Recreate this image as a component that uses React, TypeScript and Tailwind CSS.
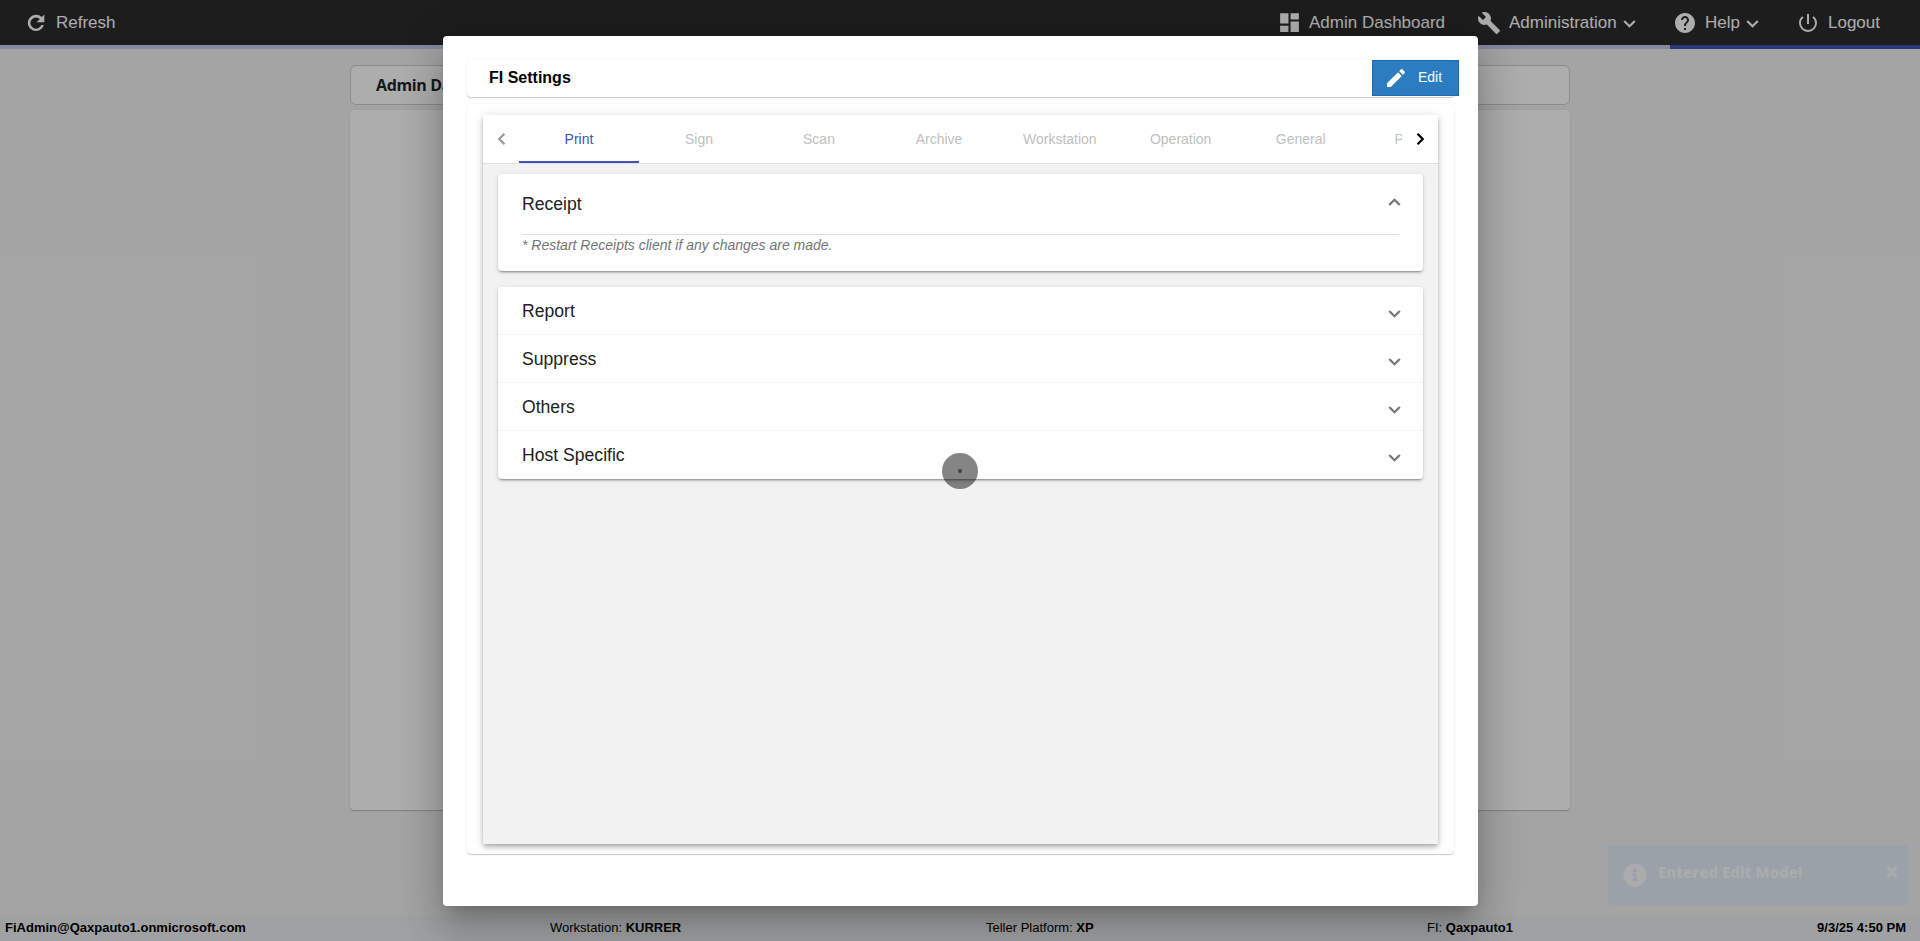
import { MdDashboard, MdBuild, MdHelp, MdPowerSettingsNew, MdEdit } from 'react-icons/md';

const tabs = ['Print', 'Sign', 'Scan', 'Archive', 'Workstation', 'Operation', 'General', 'Platform'];
const sections = ['Report', 'Suppress', 'Others', 'Host Specific'];

const cardShadow = 'shadow-[0_1px_1px_0_rgba(0,0,0,0.2),0_0_2px_0_rgba(0,0,0,0.08)]';
const panelShadow =
  'shadow-[0_3px_1px_-2px_rgba(0,0,0,0.2),0_2px_2px_0_rgba(0,0,0,0.14),0_1px_5px_0_rgba(0,0,0,0.12)]';

function Caret({ className }: { className: string }) {
  return (
    <svg viewBox="0 0 13 8" className={`w-[13px] h-2 ${className}`} fill="none" stroke="currentColor" strokeWidth="2.2">
      <path d="M1.2 1l5.3 5.3L11.8 1" />
    </svg>
  );
}

function RefreshIcon() {
  return (
    <svg viewBox="0 0 24 24" className="w-6 h-6 mt-px" fill="currentColor">
      <path d="M20.3 3.6v7.6h-7.6l3.2-3.2A5.6 5.6 0 1 0 17.3 14h2.6A8.2 8.2 0 1 1 17.8 6.1z" />
    </svg>
  );
}

function Header() {
  return (
    <header>
      <div className="h-[45px] bg-[#2b2b2b] text-white text-[17px] flex items-center justify-between pl-6 pr-10">
        <div className="flex items-center gap-2">
          <RefreshIcon />
          <span>Refresh</span>
        </div>
        <nav className="flex items-center">
          <div className="flex items-center w-[201px]">
            <MdDashboard size={25} className="mr-[7px]" />
            <span>Admin Dashboard</span>
          </div>
          <div className="flex items-center w-[195px]">
            <MdBuild size={24} className="-ml-px mr-2" />
            <span>Administration</span>
            <Caret className="ml-1.5 mt-0.5" />
          </div>
          <div className="flex items-center w-[123px]">
            <MdHelp size={24} className="mr-2" />
            <span>Help</span>
            <Caret className="ml-1.5 mt-0.5" />
          </div>
          <div className="flex items-center">
            <MdPowerSettingsNew size={24} className="mr-2" />
            <span>Logout</span>
          </div>
        </nav>
      </div>
      <div className="h-1 flex bg-[#c5cae9]">
        <div className="ml-auto w-[250px] bg-[#3f51b5]" />
      </div>
    </header>
  );
}

function Footer() {
  return (
    <footer className="h-[26px] bg-[#ebeef0] text-black text-[13px] flex items-center px-[5px]">
      <div className="w-[545px] font-bold">FiAdmin@Qaxpauto1.onmicrosoft.com</div>
      <div className="w-[436px]">Workstation: <b>KURRER</b></div>
      <div className="w-[441px]">Teller Platform: <b>XP</b></div>
      <div>FI: <b>Qaxpauto1</b></div>
      <div className="ml-auto pr-[9px] font-bold">9/3/25 4:50 PM</div>
    </footer>
  );
}

function Toast() {
  return (
    <div className="absolute left-[1608px] top-[845px] w-[300px] h-[60px] rounded-[3px] bg-[#9ba1a8] text-[#a9abad] flex pl-[15px] pr-[10px]">
      <svg viewBox="0 0 512 512" className="w-6 h-6 mt-[18px] mr-[11px] shrink-0" fill="currentColor">
        <path d="M256 8C119 8 8 119 8 256s111 248 248 248 248-111 248-248S393 8 256 8zm0 110a42 42 0 1 1 0 84 42 42 0 0 1 0-84zm56 254c0 7-5 12-12 12h-88c-7 0-12-5-12-12v-24c0-7 5-12 12-12h12v-64h-12c-7 0-12-5-12-12v-24c0-7 5-12 12-12h64c7 0 12 5 12 12v100h12c7 0 12 5 12 12z" />
      </svg>
      <span className="mt-4 leading-[22px] text-[15px] tracking-[-0.05px] font-extrabold font-['Open_Sans',sans-serif]">Entered Edit Mode!</span>
      <svg viewBox="0 0 12 12" className="w-3 h-3 ml-auto mt-[21px]" stroke="currentColor" strokeWidth="3.2">
        <path d="M1.5 1.5l9 9M10.5 1.5l-9 9" />
      </svg>
    </div>
  );
}

function SettingsTabs() {
  return (
    <div className="mx-4 h-[729px] bg-[#f2f2f2] shadow-[0_2px_4px_-1px_rgba(0,0,0,0.2),0_4px_5px_0_rgba(0,0,0,0.14),0_1px_10px_0_rgba(0,0,0,0.12)]">
      <div className="h-[49px] bg-white border-b border-[#dfdfdf] flex text-sm">
        <div className="w-9 shrink-0 flex items-center justify-center text-[#999]">
          <Caret className="rotate-90" />
        </div>
        <div className="flex flex-1 min-w-0 overflow-hidden">
          {tabs.map((tab, i) => (
            <div
              key={tab}
              className={
                i === 0
                  ? 'min-w-[120px] px-6 shrink-0 h-12 flex items-center justify-center text-[#3f51b5] border-b-2 border-[#3f51b5] pt-0.5'
                  : 'min-w-[120px] px-6 shrink-0 h-12 flex items-center justify-center text-[#bfbfbf]'
              }
            >
              {tab}
            </div>
          ))}
        </div>
        <div className="w-9 shrink-0 flex items-center justify-center text-black">
          <Caret className="-rotate-90" />
        </div>
      </div>

      <div className="pt-2.5 px-[15px] text-[#212121]">
        <div className={`h-[97px] bg-white rounded px-6 ${panelShadow}`}>
          <div className="h-[60px] flex items-center justify-between text-[17.6px]">
            <span>Receipt</span>
            <Caret className="rotate-180 text-[#757575] mb-[5px] -mr-0.5" />
          </div>
          <div className="border-t border-[#dfdfdf] text-sm leading-5 italic text-[#757575]">
            * Restart Receipts client if any changes are made.
          </div>
        </div>

        <div className={`mt-4 bg-white rounded ${panelShadow}`}>
          {sections.map((name) => (
            <div
              key={name}
              className="h-12 px-6 flex items-center justify-between text-[17.6px] border-b border-[#f5f5f5] last:border-transparent"
            >
              <span className="pt-0.5">{name}</span>
              <Caret className="text-[#757575] mt-[7px] -mr-0.5" />
            </div>
          ))}
        </div>
      </div>
    </div>
  );
}

function SettingsDialog() {
  return (
    <div className="absolute left-[443px] top-9 w-[1035px] h-[870px] bg-white rounded p-6 shadow-[0_11px_15px_-7px_rgba(0,0,0,0.2),0_24px_38px_3px_rgba(0,0,0,0.14),0_9px_46px_8px_rgba(0,0,0,0.12)]">
      <div className={`w-[987px] h-[37px] rounded pl-[22px] flex items-start justify-between ${cardShadow}`}>
        <h1 className="text-base leading-9 font-bold text-black">FI Settings</h1>
        <button className="w-[87px] h-9 -mr-[5px] shrink-0 bg-[#2b7cc1] border border-[#1f6bab] text-white text-sm flex items-center pl-[11px]">
          <MdEdit size={24} className="mr-2.5" />
          <span className="-mt-0.5">Edit</span>
        </button>
      </div>
      <div className={`mt-[7px] pt-[11px] w-[987px] h-[750px] rounded ${cardShadow}`}>
        <SettingsTabs />
      </div>
    </div>
  );
}

export default function App() {
  return (
    <div className="relative w-[1920px] h-[941px] overflow-hidden bg-[#f2f2f2] flex flex-col font-['Liberation_Sans',Arial,sans-serif]">
      <Header />
      <main className="flex-1 w-[1220px] mx-auto pt-4">
        <div className="h-10 bg-white border border-[#cfcfcf] rounded-md pl-[25px] flex items-center">
          <h2 className="text-base font-bold tracking-[-0.35px] text-[#212529] font-['Open_Sans',sans-serif]">Admin Dashboard</h2>
        </div>
        <div className={`mt-[5px] h-[700px] bg-white rounded ${cardShadow}`} />
      </main>
      <Footer />

      <div className="absolute inset-0 bg-black/32" />
      <Toast />
      <SettingsDialog />

      {/* pointer marker */}
      <div className="absolute left-[942px] top-[453px] w-9 h-9 rounded-full bg-black/48 flex items-center justify-center">
        <span className="w-1 h-1 rounded-full bg-black/50" />
      </div>
    </div>
  );
}
